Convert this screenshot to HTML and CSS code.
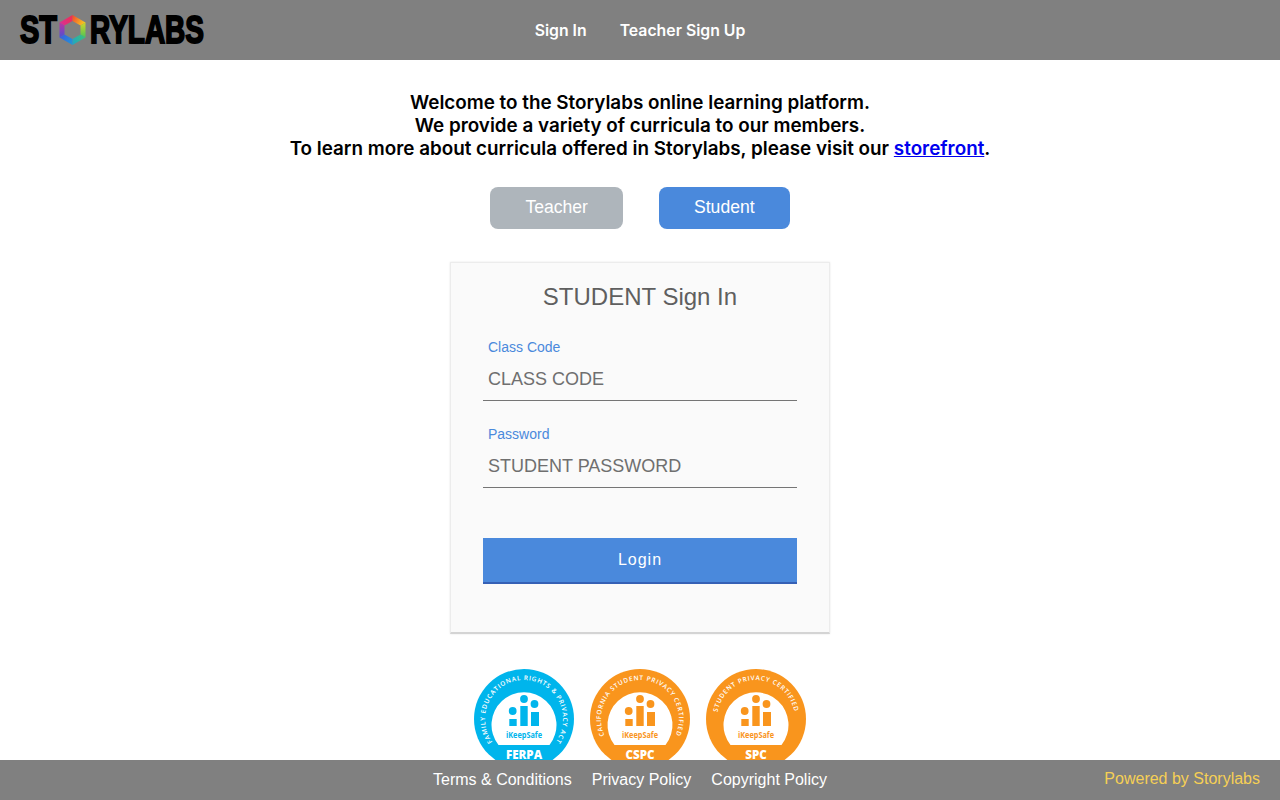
FILE: index.html
```html
<!DOCTYPE html>
<html lang="en">
<head>
<meta charset="utf-8">
<title>Storylabs</title>
<link rel="stylesheet" href="styles.css">
</head>
<body>
<header class="topbar">
  <svg class="logo" width="188" height="60" viewBox="0 -14 188 60" role="img" aria-label="Storylabs">
    <defs>
      <linearGradient id="h1" gradientUnits="userSpaceOnUse" x1="40.5" y1="8.5" x2="53.5" y2="1"><stop offset="0" stop-color="#d82f96"/><stop offset="1" stop-color="#f0304c"/></linearGradient>
      <linearGradient id="h2" gradientUnits="userSpaceOnUse" x1="53.5" y1="1" x2="66.5" y2="8.5"><stop offset="0" stop-color="#f2452f"/><stop offset="1" stop-color="#f6d01f"/></linearGradient>
      <linearGradient id="h3" gradientUnits="userSpaceOnUse" x1="66.5" y1="8.5" x2="66.5" y2="23.5"><stop offset="0" stop-color="#d4d426"/><stop offset="1" stop-color="#4cc45a"/></linearGradient>
      <linearGradient id="h4" gradientUnits="userSpaceOnUse" x1="66.5" y1="23.5" x2="53.5" y2="31"><stop offset="0" stop-color="#3cc07a"/><stop offset="1" stop-color="#20a4c8"/></linearGradient>
      <linearGradient id="h5" gradientUnits="userSpaceOnUse" x1="53.5" y1="31" x2="40.5" y2="23.5"><stop offset="0" stop-color="#2098d4"/><stop offset="1" stop-color="#3a5ee0"/></linearGradient>
      <linearGradient id="h6" gradientUnits="userSpaceOnUse" x1="40.5" y1="23.5" x2="40.5" y2="8.5"><stop offset="0" stop-color="#4a52d4"/><stop offset="1" stop-color="#c4309f"/></linearGradient>
    </defs>
    <text class="logo-text" x="1" y="29" textLength="37" lengthAdjust="spacingAndGlyphs">ST</text>
    <polygon points="40.5,8.5 53.5,1 53.5,7 45.5,11.5" fill="url(#h1)"/>
    <polygon points="53.5,1 66.5,8.5 61.5,11.5 53.5,7" fill="url(#h2)"/>
    <polygon points="66.5,8.5 66.5,23.5 61.5,20.5 61.5,11.5" fill="url(#h3)"/>
    <polygon points="66.5,23.5 53.5,31 53.5,25 61.5,20.5" fill="url(#h4)"/>
    <polygon points="53.5,31 40.5,23.5 45.5,20.5 53.5,25" fill="url(#h5)"/>
    <polygon points="40.5,23.5 40.5,8.5 45.5,11.5 45.5,20.5" fill="url(#h6)"/>
    <text class="logo-text" x="71" y="29" textLength="114" lengthAdjust="spacingAndGlyphs">RYLABS</text>
  </svg>
  <nav class="topnav">
    <a href="#">Sign In</a>
    <a href="#">Teacher Sign Up</a>
  </nav>
</header>

<main class="page">
  <p class="intro">Welcome to the Storylabs online learning platform.<br>We provide a variety of curricula to our members.<br>To learn more about curricula offered in Storylabs, please visit our <a href="#">storefront</a>.</p>

  <div class="roles">
    <button class="role role-muted" type="button">Teacher</button>
    <button class="role role-active" type="button">Student</button>
  </div>

  <form class="card">
    <h1 class="card-title">STUDENT Sign In</h1>
    <div class="field">
      <label class="field-label" for="code">Class Code</label>
      <input class="field-input" id="code" type="text" placeholder="CLASS CODE">
    </div>
    <div class="field">
      <label class="field-label" for="pw">Password</label>
      <input class="field-input" id="pw" type="text" placeholder="STUDENT PASSWORD">
    </div>
    <button class="login" type="button">Login</button>
  </form>

  <div class="badges">
    <svg class="badge badge-blue" width="100" height="100" viewBox="0 0 100 100" role="img" aria-label="FERPA">
      <circle class="disc" cx="50" cy="50" r="50"/>
      <path class="hole" d="M24.5,76 A32.5,32.5 0 1 1 75.5,76 Z"/>
      <g class="mark">
        <circle cx="38.7" cy="42" r="3.9"/><rect x="35.3" y="50" width="7.4" height="7"/>
        <circle cx="50" cy="30" r="3.9"/><rect x="46.3" y="37" width="7.4" height="20"/>
        <circle cx="60.5" cy="35" r="3.9"/><rect x="57" y="43" width="8" height="14"/>
      </g>
      <text class="brand" x="50" y="69" textLength="36" lengthAdjust="spacingAndGlyphs">iKeepSafe</text>
      <path id="ring-a" class="ring-path" d="M50,89 A39,39 0 0 1 11,50 A39,39 0 0 1 89,50 A39,39 0 0 1 50,89"/>
      <text class="ring-text"><textPath href="#ring-a" startOffset="50%">FAMILY EDUCATIONAL RIGHTS &amp; PRIVACY ACT</textPath></text>
      <text class="seal" x="50" y="89.5">FERPA</text>
    </svg>
    <svg class="badge badge-orange" width="100" height="100" viewBox="0 0 100 100" role="img" aria-label="CSPC">
      <circle class="disc" cx="50" cy="50" r="50"/>
      <path class="hole" d="M24.5,76 A32.5,32.5 0 1 1 75.5,76 Z"/>
      <g class="mark">
        <circle cx="38.7" cy="42" r="3.9"/><rect x="35.3" y="50" width="7.4" height="7"/>
        <circle cx="50" cy="30" r="3.9"/><rect x="46.3" y="37" width="7.4" height="20"/>
        <circle cx="60.5" cy="35" r="3.9"/><rect x="57" y="43" width="8" height="14"/>
      </g>
      <text class="brand" x="50" y="69" textLength="36" lengthAdjust="spacingAndGlyphs">iKeepSafe</text>
      <path id="ring-b" class="ring-path" d="M50,89 A39,39 0 0 1 11,50 A39,39 0 0 1 89,50 A39,39 0 0 1 50,89"/>
      <text class="ring-text"><textPath href="#ring-b" startOffset="50%">CALIFORNIA STUDENT PRIVACY CERTIFIED</textPath></text>
      <text class="seal" x="50" y="89.5">CSPC</text>
    </svg>
    <svg class="badge badge-orange" width="100" height="100" viewBox="0 0 100 100" role="img" aria-label="SPC">
      <circle class="disc" cx="50" cy="50" r="50"/>
      <path class="hole" d="M24.5,76 A32.5,32.5 0 1 1 75.5,76 Z"/>
      <g class="mark">
        <circle cx="38.7" cy="42" r="3.9"/><rect x="35.3" y="50" width="7.4" height="7"/>
        <circle cx="50" cy="30" r="3.9"/><rect x="46.3" y="37" width="7.4" height="20"/>
        <circle cx="60.5" cy="35" r="3.9"/><rect x="57" y="43" width="8" height="14"/>
      </g>
      <text class="brand" x="50" y="69" textLength="36" lengthAdjust="spacingAndGlyphs">iKeepSafe</text>
      <path id="ring-c" class="ring-path" d="M50,89 A39,39 0 0 1 11,50 A39,39 0 0 1 89,50 A39,39 0 0 1 50,89"/>
      <text class="ring-text"><textPath href="#ring-c" startOffset="50%">STUDENT PRIVACY CERTIFIED</textPath></text>
      <text class="seal" x="50" y="89.5">SPC</text>
    </svg>
  </div>
</main>

<footer class="footer">
  <nav class="footer-links">
    <a href="#">Terms &amp; Conditions</a>
    <a href="#">Privacy Policy</a>
    <a href="#">Copyright Policy</a>
  </nav>
  <a class="powered" href="#">Powered by Storylabs</a>
</footer>
</body>
</html>
```
FILE: styles.css
```css
* { box-sizing: border-box; }
html, body { margin: 0; padding: 0; }
body {
  background: #fff;
  font-family: "Liberation Sans", Arial, sans-serif;
  color: #000;
  overflow: hidden;
  height: 800px;
}

.topbar {
  height: 60px;
  background: #808080;
  display: flex;
  align-items: center;
  justify-content: center;
  position: relative;
}
.logo { position: absolute; left: 19px; top: 0; }
.logo-text {
  font-family: "Liberation Sans Narrow", "Liberation Sans", Arial, sans-serif;
  font-weight: 700;
  font-size: 39px;
  fill: #000;
  stroke: #000;
  stroke-width: 2px;
}
.topnav { display: flex; gap: 33px; }
.topnav a {
  font-family: Inter, "Open Sans", sans-serif;
  font-weight: 600;
  font-size: 15.8px;
  color: #fff;
  text-decoration: none;
}

.page {
  display: flex;
  flex-direction: column;
  align-items: center;
}
.intro {
  margin: 31px 0 0;
  font-family: Inter, "Open Sans", sans-serif;
  font-weight: 600;
  font-size: 18.84px;
  line-height: 23px;
  text-align: center;
}
.intro a { color: #0000ee; text-decoration: underline; }

.roles { display: flex; gap: 36px; margin-top: 27px; }
.role {
  height: 42px;
  padding: 0 35px 2px;
  border: 0;
  border-radius: 8px;
  font-family: "Liberation Sans", Arial, sans-serif;
  font-size: 17.6px;
  color: #fff;
}
.role-muted { background: #aeb5bb; }
.role-active { background: #4a89dc; }

.card {
  width: 380px;
  height: 372px;
  margin-top: 33px;
  padding: 20px 32px 0;
  background: #fafafa;
  border: 1px solid #ececec;
  border-bottom: 2px solid #d4d4d4;
  box-shadow: 0 0 2px rgba(0, 0, 0, 0.1);
  display: flex;
  flex-direction: column;
}
.card-title {
  margin: 0 0 28px;
  font-size: 24px;
  line-height: 28px;
  font-weight: 400;
  color: #5f5f5f;
  text-align: center;
}
.field { display: flex; flex-direction: column; margin-bottom: 25px; }
.field-label {
  padding-left: 5px;
  font-size: 14px;
  line-height: 16px;
  color: #4a89dc;
}
.field-input {
  height: 46px;
  padding: 4px 5px 0;
  border: 0;
  border-bottom: 1px solid #757575;
  border-radius: 0;
  background: transparent;
  font-family: "Liberation Sans", Arial, sans-serif;
  font-size: 18px;
  outline: none;
}
.field-input::placeholder { color: #6f6f6f; opacity: 1; }
.login {
  height: 46px;
  margin-top: 25px;
  border: 0;
  border-bottom: 2px solid #3560b5;
  background: #4a89dc;
  color: #fff;
  font-family: "Liberation Sans", Arial, sans-serif;
  font-size: 16px;
  letter-spacing: 1px;
}

.badges { display: flex; gap: 16px; margin-top: 35px; }
.badge { display: block; }
.badge-blue { --badge: #00b5ec; }
.badge-orange { --badge: #f9951d; }
.disc { fill: var(--badge); }
.hole { fill: #fff; }
.mark { fill: var(--badge); }
.brand {
  fill: var(--badge);
  font-family: "Open Sans", sans-serif;
  font-weight: 700;
  font-size: 8.4px;
  text-anchor: middle;
}
.ring-path { fill: none; stroke: none; }
.ring-text {
  fill: #fff;
  font-family: "Open Sans", sans-serif;
  font-weight: 600;
  font-size: 6.4px;
  letter-spacing: 0.78px;
  text-anchor: middle;
}
.seal {
  fill: #fff;
  font-family: "Open Sans", sans-serif;
  font-weight: 800;
  font-size: 11.6px;
  text-anchor: middle;
}

.footer {
  position: fixed;
  left: 0;
  right: 0;
  bottom: 0;
  height: 40px;
  background: #808080;
  display: flex;
  align-items: center;
  justify-content: center;
  font-size: 16px;
}
.footer a { color: #fff; text-decoration: none; }
.footer-links { display: flex; gap: 20px; margin-right: 20px; margin-top: -1px; }
.footer .powered {
  position: absolute;
  right: 20px;
  top: 10px;
  color: #f5cf55;
}
```
